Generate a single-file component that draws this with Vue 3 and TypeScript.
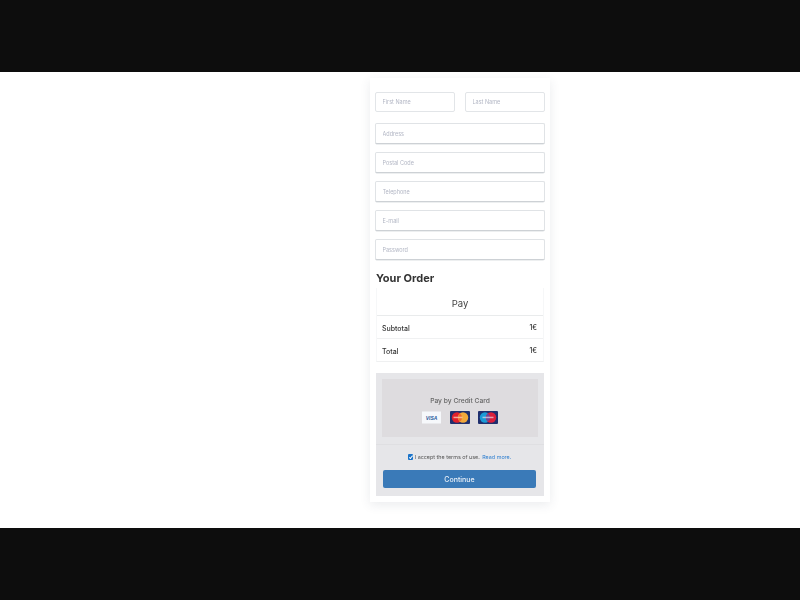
<script setup lang="ts">
interface Field {
  label: string
}

const fields: Field[] = [
  { label: 'Address' },
  { label: 'Postal Code' },
  { label: 'Telephone' },
  { label: 'E-mail' },
  { label: 'Password' }
]

const rows = [
  { name: 'Subtotal', price: '1€' },
  { name: 'Total', price: '1€' }
]
</script>

<template>
  <div class="page">
    <div class="bar"></div>
    <main class="stage">
      <form class="card" @submit.prevent>
        <div class="name-row">
          <input class="field short" placeholder="First Name" />
          <input class="field short" placeholder="Last Name" />
        </div>
        <div class="fields">
          <input
            v-for="f in fields"
            :key="f.label"
            class="field"
            :placeholder="f.label"
          />
        </div>

        <h2 class="title">Your Order</h2>
        <div class="order">
          <div class="order-head">Pay</div>
          <div v-for="r in rows" :key="r.name" class="order-row">
            <span class="row-name">{{ r.name }}</span>
            <span class="row-price">{{ r.price }}</span>
          </div>
        </div>

        <section class="payment">
          <div class="method">
            <div class="method-title">Pay by Credit Card</div>
            <div class="cards">
              <!-- visa -->
              <svg class="pay-card" width="19" height="13" viewBox="0 0 19 13">
                <rect y="0.5" width="19" height="12" fill="#f6f8fb" />
                <text x="9.5" y="8.8" text-anchor="middle" class="visa">VISA</text>
              </svg>
              <!-- mastercard -->
              <svg class="pay-card" width="20" height="13" viewBox="0 0 20 13">
                <rect width="20" height="13" rx="1" fill="#1f2f6e" />
                <circle cx="7" cy="6.5" r="5.2" fill="#e0202c" />
                <circle cx="13" cy="6.5" r="5.2" fill="#f2a93b" />
                <path d="M10 2.4a5.2 5.2 0 0 0 0 8.2a5.2 5.2 0 0 0 0-8.2z" fill="#ef6a2a" />
                <rect x="3.5" y="5.7" width="9" height="1.5" fill="#f7d3bb" opacity="0.75" />
              </svg>
              <!-- maestro -->
              <svg class="pay-card" width="20" height="13" viewBox="0 0 20 13">
                <rect width="20" height="13" rx="1" fill="#1f2f6e" />
                <circle cx="7" cy="6.5" r="5.2" fill="#1a9bd7" />
                <circle cx="13" cy="6.5" r="5.2" fill="#dc1f3c" />
                <path d="M10 2.4a5.2 5.2 0 0 0 0 8.2a5.2 5.2 0 0 0 0-8.2z" fill="#6a4a9c" />
                <rect x="4.5" y="5.7" width="11" height="1.5" fill="#e9d5e6" opacity="0.7" />
              </svg>
            </div>
          </div>
          <div class="terms-box">
            <label class="terms">
              <input class="check" type="checkbox" checked />
              <span>I accept the terms of use.</span>
              <a class="more" href="#">Read more.</a>
            </label>
            <button class="continue" type="submit">Continue</button>
          </div>
        </section>
      </form>
    </main>
    <div class="bar"></div>
  </div>
</template>

<style>
html,
body {
  margin: 0;
  background: #fff;
}
</style>

<style scoped>
.page {
  width: 800px;
  height: 600px;
  display: flex;
  flex-direction: column;
  overflow: hidden;
  font-family: Inter, "Liberation Sans", sans-serif;
  color: #333;
}

.bar {
  height: 72px;
  flex-shrink: 0;
  background: #0d0d0d;
}

.stage {
  height: 456px;
  padding: 6px 0 0 370px;
  box-sizing: border-box;
  background: #fff;
}

/* the reference is a scaled-down capture, hence the slight blur */
.card {
  width: 180px;
  height: 424px;
  box-sizing: border-box;
  padding: 14px 5px 0;
  background: #fff;
  box-shadow: 0 3px 10px rgba(60, 70, 90, 0.1);
  filter: blur(0.4px);
}

.name-row {
  display: flex;
  justify-content: space-between;
}

.fields {
  display: flex;
  flex-direction: column;
  gap: 8px;
  margin-top: 11px;
}

.field {
  display: block;
  width: 100%;
  height: 21px;
  box-sizing: border-box;
  padding: 0 6.5px;
  border: 1px solid #e0e3e6;
  border-bottom-color: #cdd1d5;
  border-radius: 2px;
  background: #fff;
  box-shadow: 0 0.5px 0 #dcdfe2;
  font: 5.5px Inter, "Liberation Sans", sans-serif;
  outline: none;
}

.field::placeholder {
  color: #b2b6c4;
}

.short {
  width: 80px;
  height: 20px;
  border-color: #e2e5e8;
  box-shadow: none;
}

.title {
  margin: 10px 0 0 1px;
  font-size: 11px;
  line-height: 16px;
  font-weight: 700;
  color: #333;
}

.order {
  margin: 2px 1px 0;
  padding-bottom: 1px;
  border: 1px solid #f6f7f8;
  border-top: 0;
  border-bottom-color: #eff0f1;
}

.order-head {
  height: 28px;
  box-sizing: border-box;
  padding-top: 3px;
  display: flex;
  align-items: center;
  justify-content: center;
  font-size: 9.5px;
  color: #444;
  border-bottom: 1px solid #e9ebec;
}

.order-row {
  height: 22px;
  box-sizing: border-box;
  padding: 3px 6px 0 5px;
  display: flex;
  align-items: center;
  justify-content: space-between;
  font-size: 7px;
  font-weight: 500;
  color: #333;
}

.order-row + .order-row {
  border-top: 1px solid #f0f1f2;
}

.row-price {
  margin-top: -2px;
}

.payment {
  margin: 11px 1px 0;
  height: 123px;
  background: #e6e6e9;
  display: flex;
  flex-direction: column;
}

.method {
  margin: 6px 6px 0;
  height: 58px;
  box-sizing: border-box;
  padding-top: 17px;
  background: #dedcdf;
  text-align: center;
}

.method-title {
  font-size: 6.7px;
  font-weight: 500;
  line-height: 10px;
  color: #666;
}

.cards {
  display: flex;
  justify-content: center;
  align-items: center;
  gap: 8.5px;
  margin-top: 4.5px;
}

.pay-card {
  display: block;
}

.visa {
  font: italic 700 5px "Liberation Sans", sans-serif;
  fill: #2a5a9c;
}

.terms-box {
  margin-top: 7px;
  border-top: 1px solid #dfdfe2;
  padding: 0 8px 0 7px;
  flex: 1;
}

.terms {
  display: flex;
  align-items: center;
  justify-content: center;
  gap: 1.5px;
  height: 24px;
  font-size: 5.4px;
  color: #555;
}

.check {
  appearance: none;
  position: relative;
  width: 5.5px;
  height: 5.5px;
  margin: 0;
  border-radius: 1px;
  background: #1a73c9;
}

.check::after {
  content: "";
  position: absolute;
  left: 1.8px;
  top: 0.5px;
  width: 1.4px;
  height: 2.8px;
  border: solid #fff;
  border-width: 0 0.7px 0.7px 0;
  transform: rotate(40deg);
}

.more {
  margin-left: 1px;
  color: #2f7fd0;
  text-decoration: none;
}

.continue {
  display: block;
  width: 100%;
  height: 18px;
  margin-top: 1px;
  padding: 0;
  border: 0;
  border-radius: 2px;
  background: #3a7ab8;
  color: #e8f0f8;
  font: 500 7px Inter, "Liberation Sans", sans-serif;
}
</style>
